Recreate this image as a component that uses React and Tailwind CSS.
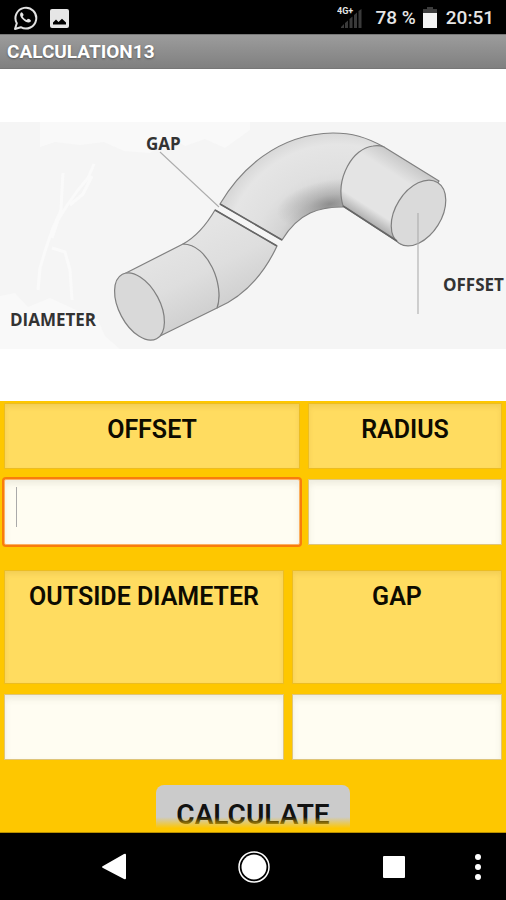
import React from 'react';

function StatusBar() {
  return (
    <header className="flex h-[34px] shrink-0 items-center justify-between bg-black pt-[2px] pl-[13px] pr-3 text-[19px] font-medium text-[#e6e6e6]">
      <div className="flex items-center gap-3">
        <svg width="25" height="26" viewBox="0 0 25 26" fill="none" role="img" aria-label="WhatsApp">
          <path d="M2 24 L3.8 18.2 A10.4 10.4 0 1 1 7.8 22.2 Z" stroke="#e2e2e2" strokeWidth="2" strokeLinejoin="round" />
          <path d="M9 7.4c-.7-.2-1.7.7-1.9 1.9-.2 1.600.9 3.400 2.800 5.300s3.900 3 5.700 2.900c1.300-.1 2.500-1.100 2.300-2.100-.1-.5-2.400-1.700-2.900-1.600-.6.1-1 1.300-1.600 1.200-1.500-.5-3.100-2-3.700-3.400-.1-.6.900-1 .9-1.600 0-.5-.9-2.500-1.600-2.600z" fill="#e6e6e6" />
        </svg>
        <svg width="19" height="19" viewBox="0 0 19 19" role="img" aria-label="Picture">
          <rect width="19" height="19" rx="2" fill="#e6e6e6" />
          <path d="M3 15.500V13.500L6 10.500 8.500 13 12 9.700 16 13.500V15.500z" fill="#000" />
        </svg>
      </div>
      <div className="flex items-center">
        <svg className="mr-3" width="26" height="24" viewBox="0 0 26 24" role="img" aria-label="4G+ signal">
          <path d="M4 22v-1l3-3v4zM8 22v-5l3-2.500V22zM12.500 22v-9l3-2.500V22zM17 22V9l3-2.500V22zM21.500 22V5l3-2v19z" fill="#3a3a3a" />
          <text x="0" y="8" className="fill-[#e6e6e6] font-['Roboto'] text-[9px] font-bold">4G+</text>
        </svg>
        <span>78 %</span>
        <svg className="ml-[7px] mr-[9px]" width="14" height="22" viewBox="0 0 14 22" role="img" aria-label="Battery">
          <path d="M4 0h6v2h4v5H0V2h4z" fill="#3c3c3c" />
          <path d="M0 6h14v15H0z" fill="#f2f2f2" />
        </svg>
        <span>20:51</span>
      </div>
    </header>
  );
}

function PipeDiagram() {
  return (
    <svg viewBox="0 122 506 227" className="block w-full" role="img" aria-label="Offset pipe diagram">
      <defs>
        <linearGradient id="left" x1="150" y1="255" x2="185" y2="325" gradientUnits="userSpaceOnUse">
          <stop offset="0" stopColor="#e4e4e4" />
          <stop offset="0.5" stopColor="#dedede" />
          <stop offset="1" stopColor="#d0d0d0" />
        </linearGradient>
        <radialGradient id="bend" cx="338" cy="258" r="126" gradientUnits="userSpaceOnUse">
          <stop offset="0.38" stopColor="#c0c0c0" />
          <stop offset="0.5" stopColor="#d4d4d4" />
          <stop offset="0.68" stopColor="#e0e0e0" />
          <stop offset="0.9" stopColor="#e5e5e5" />
          <stop offset="1" stopColor="#d8d8d8" />
        </radialGradient>
        <radialGradient id="shade">
          <stop offset="0" stopColor="#666" stopOpacity="0.6" />
          <stop offset="0.4" stopColor="#707070" stopOpacity="0.32" />
          <stop offset="1" stopColor="#777" stopOpacity="0" />
        </radialGradient>
        <linearGradient id="right" x1="411" y1="163" x2="371" y2="226" gradientUnits="userSpaceOnUse">
          <stop offset="0" stopColor="#c8c8c8" />
          <stop offset="0.25" stopColor="#e4e4e4" />
          <stop offset="0.8" stopColor="#e4e4e4" />
          <stop offset="1" stopColor="#a8a8a8" />
        </linearGradient>
        <clipPath id="bendArea">
          <path d="M220 204C240 170 277 134 333 133 352 133 366 137 384 147L343 207C320 207 299 212 282 240z" />
        </clipPath>
      </defs>
      <rect y="122" width="506" height="227" fill="#f5f5f5" />
      <g fill="#f9f9f9">
        <path d="M40 122H250V130L225 148 205 139 185 146 172 138 150 153 124 151 104 142 80 145 55 142 40 147z" />
        <path d="M0 296 15 293 28 307 50 298 76 310 98 320 105 336 120 349H0z" />
      </g>
      <path d="M63 173 62 190 61 210 53 228 46 248 40 268 38 290M94 164 88 178 78 190 68 204 58 220 52 238M92 176 83 194 70 205M52 248 65 252 70 270 72 300" fill="none" stroke="#fafafa" strokeWidth="3" strokeLinejoin="round" />
      <g stroke="#808080" strokeWidth="1.2" strokeLinejoin="round">
        <path d="M183 244Q201 234 215 210L277 246Q256 291 217 308C224 286 208 246 183 244z" fill="url(#left)" />
        <path d="M124 274 183 244C208 244 225 286 217 308L156 338z" fill="url(#left)" />
        <ellipse cx="139.500" cy="306.500" rx="36.500" ry="20.500" transform="rotate(62 139.500 306.500)" fill="#d9d9d9" />
        <path d="M220 204C240 170 277 134 333 133 352 133 366 137 384 147L343 207C320 207 299 212 282 240z" fill="url(#bend)" />
        <g clipPath="url(#bendArea)" stroke="none">
          <ellipse cx="330" cy="204" rx="54" ry="24" transform="rotate(-10 330 204)" fill="url(#shade)" />
        </g>
        <path d="M373 146Q379 145 384 147L439 181 401 244 343 206C335 178 353 148 373 146z" fill="url(#right)" />
        <ellipse cx="418.500" cy="213" rx="36" ry="23" transform="rotate(-58 418.500 213)" fill="#dadada" />
      </g>
      <path d="M215 210 277 246M220 204 282 240M343 206 397 241" stroke="#666" strokeWidth="1.600" />
      <path d="M160 152 219 207M418 213V314" stroke="#adadad" strokeWidth="1.100" />
      <g className="fill-[#333] font-['Open_Sans'] text-[17px] font-bold">
        <text x="146" y="150">GAP</text>
        <text x="10" y="326">DIAMETER</text>
        <text x="443" y="291">OFFSET</text>
      </g>
    </svg>
  );
}

const labelStyle =
  'border border-[#ecbd22] bg-[#ffdc60] pt-2 text-center text-[25px] leading-9 font-semibold text-[#0d0b00] shadow-[inset_0_3px_5px_rgba(190,150,40,0.2)]';
const inputStyle =
  'block h-[66px] w-full border border-[#dfc57a] bg-[#fffdf2] px-3 text-[25px] text-black caret-transparent shadow-[inset_0_4px_6px_rgba(90,90,60,0.1)] outline-none';

export default function App() {
  return (
    <div className="flex h-screen flex-col bg-black font-['Roboto',sans-serif]">
      <StatusBar />
      <h1 className="h-[35px] shrink-0 border-t border-b border-t-[#777] border-b-[#777] bg-linear-to-b from-[#9c9c9c] to-[#808080] pl-[7px] text-[19px] leading-[34px] font-bold text-white [text-shadow:0_1px_2px_#555]">
        CALCULATION13
      </h1>
      <main className="relative min-h-0 flex-1 overflow-hidden bg-[#fec700]">
        <div className="bg-white pt-[53px] pb-[52px]">
          <PipeDiagram />
        </div>
        <form className="px-1 pt-[2px]" onSubmit={(e) => e.preventDefault()}>
          <div className="grid grid-cols-[296fr_194fr] gap-x-2 gap-y-[10px]">
            <label htmlFor="offset" className={`${labelStyle} h-[66px]`}>OFFSET</label>
            <label htmlFor="radius" className={`${labelStyle} h-[66px]`}>RADIUS</label>
            <div className="relative">
              <input id="offset" className="block h-[66px] w-full rounded-xs border border-[#fbb060] bg-[#fffdf2] px-3 text-[25px] text-black caret-transparent shadow-[inset_0_4px_6px_rgba(90,90,60,0.1)] ring-2 ring-[#f97c0c] outline-none" />
              <span className="absolute top-2 left-3 h-10 w-px bg-[#aaa]" />
            </div>
            <input id="radius" className={inputStyle} />
          </div>
          <div className="mt-[25px] grid grid-cols-[4fr_3fr] gap-x-2 gap-y-[10px]">
            <label htmlFor="diameter" className={`${labelStyle} h-[114px]`}>OUTSIDE DIAMETER</label>
            <label htmlFor="gap" className={`${labelStyle} h-[114px]`}>GAP</label>
            <input id="diameter" className={inputStyle} />
            <input id="gap" className={inputStyle} />
          </div>
          <button type="submit" className="mx-auto mt-[25px] block rounded-lg bg-[#cbcbcb] px-5 py-3 text-[28px] leading-9 font-semibold text-[#111]">
            CALCULATE
          </button>
        </form>
        <div className="absolute inset-x-0 bottom-0 h-4 border-b border-[#b98f00] bg-linear-to-b from-transparent to-[#fec700] to-75%" />
      </main>
      <nav className="flex h-[67px] shrink-0 items-center justify-end gap-[90px] bg-black pr-[18px] text-white">
        <button type="button" aria-label="Back">
          <svg width="50" height="32" viewBox="0 0 50 32">
            <path d="M14 15 35 3Q37 2 37 4V27Q37 29 35 28L14 17Q12 16 14 15z" fill="currentColor" />
          </svg>
        </button>
        <button type="button" aria-label="Home">
          <svg width="50" height="32" viewBox="0 0 50 32" fill="currentColor">
            <circle cx="25" cy="16" r="15" fill="none" stroke="currentColor" strokeWidth="1.500" />
            <circle cx="25" cy="16" r="12.500" />
          </svg>
        </button>
        <button type="button" aria-label="Recent apps">
          <svg width="50" height="32" viewBox="0 0 50 32">
            <rect x="14" y="5" width="22" height="22" rx="1" fill="currentColor" />
          </svg>
        </button>
        <button type="button" aria-label="More" className="-ml-[41px]">
          <svg width="20" height="32" viewBox="0 0 20 32" fill="currentColor">
            <circle cx="10" cy="6" r="3" />
            <circle cx="10" cy="16" r="3" />
            <circle cx="10" cy="26" r="3" />
          </svg>
        </button>
      </nav>
    </div>
  );
}
